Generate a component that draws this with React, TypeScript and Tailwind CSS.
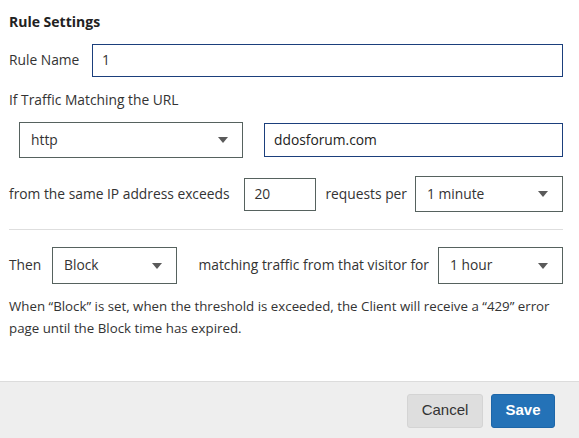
import React from "react";

const font = { fontFamily: '"Open Sans", "Noto Sans", sans-serif' };

function Caret() {
  return (
    <svg width="10" height="6" viewBox="0 0 10 6" className="shrink-0">
      <path d="M0 0h10L5 6z" fill="#5a5a5a" />
    </svg>
  );
}

function SelectBox({ value, className }: { value: string; className: string }) {
  return (
    <div
      className={`flex items-center justify-between border border-[#56625e] bg-white pl-[11px] pr-[14px] ${className}`}
    >
      <span>{value}</span>
      <Caret />
    </div>
  );
}

export default function App() {
  return (
    <div className="flex h-[438px] w-[579px] flex-col bg-white text-[13.8px] text-[#333]" style={font}>
      <div className="flex-1 pl-[9px] pr-[16px]">
        <h2 className="mt-[12px] text-[14px] font-bold leading-[20px] text-[#222]">Rule Settings</h2>

        <div className="mt-[12px] flex items-center">
          <span className="w-[83px] shrink-0">Rule Name</span>
          <div className="flex h-[33px] flex-1 items-center border border-[#1b3f7c] px-[9px]">1</div>
        </div>

        <div className="mt-[14px] leading-[18px]">If Traffic Matching the URL</div>

        <div className="mt-[13px] flex items-center pl-[10px]">
          <SelectBox value="http" className="h-[36px] w-[224px]" />
          <div className="ml-[21px] flex h-[34px] flex-1 items-center border border-[#1b3f7c] px-[9px] text-[#222]">
            ddosforum.com
          </div>
        </div>

        <div className="mt-[18px] flex items-center">
          <span className="shrink-0">from the same IP address exceeds</span>
          <div className="ml-auto flex h-[33px] w-[72px] items-center border border-[#56625e] px-[9px]">20</div>
          <span className="ml-[9px] shrink-0">requests per</span>
          <SelectBox value="1 minute" className="ml-[8px] h-[36px] w-[148px]" />
        </div>

        <div className="mt-[17px] border-t border-[#dedede]" />

        <div className="mt-[17px] flex items-center">
          <span className="w-[43px] shrink-0">Then</span>
          <SelectBox value="Block" className="h-[37px] w-[125px]" />
          <span className="ml-auto shrink-0">matching traffic from that visitor for</span>
          <SelectBox value="1 hour" className="ml-[9px] h-[37px] w-[125px]" />
        </div>

        <p className="mt-[11px] w-[545px] text-[13.3px] leading-[22px]">
          When “Block” is set, when the threshold is exceeded, the Client will receive a “429” error page until the
          Block time has expired.
        </p>
      </div>

      <div className="flex h-[57px] items-center justify-end gap-[8px] border-t border-[#dcdcdc] bg-[#eeeeee] pr-[24px] pt-[1px]" style={{ fontFamily: '"Liberation Sans", Arial, sans-serif' }}>
        <button className="h-[34px] w-[76px] rounded-[3px] border border-[#d4d4d4] bg-[#dedede] text-[15px] text-[#333]">
          Cancel
        </button>
        <button className="h-[34px] w-[64px] rounded-[3px] border border-[#1d66a8] bg-[#2472b7] text-[15px] font-bold text-white">
          Save
        </button>
      </div>
    </div>
  );
}
